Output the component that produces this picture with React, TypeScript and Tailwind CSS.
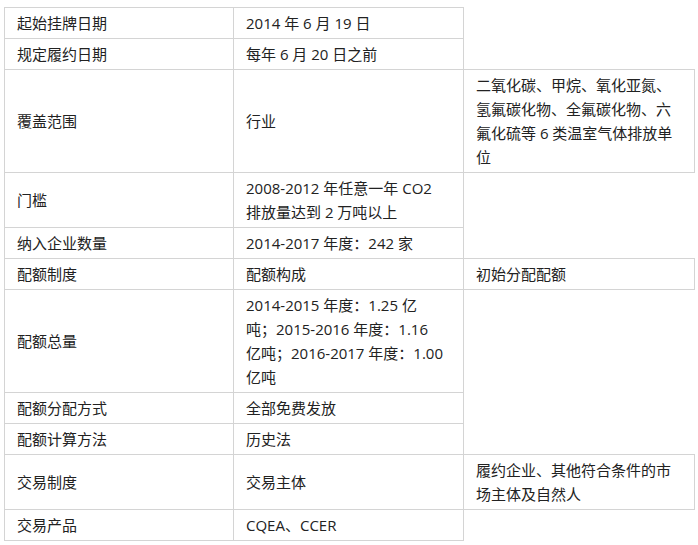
import React from 'react';

// each cell is a list of lines, broken where the reference breaks them
type Cell = string[];

const rows: Cell[][] = [
  [['起始挂牌日期'], ['2014 年 6 月 19 日']],
  [['规定履约日期'], ['每年 6 月 20 日之前']],
  [
    ['覆盖范围'],
    ['行业'],
    ['二氧化碳、甲烷、氧化亚氮、', '氢氟碳化物、全氟碳化物、六', '氟化硫等 6 类温室气体排放单', '位'],
  ],
  [['门槛'], ['2008-2012 年任意一年 CO2', '排放量达到 2 万吨以上']],
  [['纳入企业数量'], ['2014-2017 年度：242 家']],
  [['配额制度'], ['配额构成'], ['初始分配配额']],
  [
    ['配额总量'],
    ['2014-2015 年度：1.25 亿', '吨；2015-2016 年度：1.16', '亿吨；2016-2017 年度：1.00', '亿吨'],
  ],
  [['配额分配方式'], ['全部免费发放']],
  [['配额计算方法'], ['历史法']],
  [['交易制度'], ['交易主体'], ['履约企业、其他符合条件的市', '场主体及自然人']],
  [['交易产品'], ['CQEA、CCER']],
];

export default function App() {
  return (
    <div className="min-h-screen bg-white pt-[7px] pl-[4px] font-['Open_Sans','Noto_Sans_CJK_SC',sans-serif] text-[15px] leading-[24px] text-[#222]">
      <table className="border-collapse table-fixed w-[690px]">
        <colgroup>
          <col className="w-[229px]" />
          <col className="w-[230px]" />
          <col className="w-[231px]" />
        </colgroup>
        <tbody>
          {rows.map((row, i) => (
            <tr key={i}>
              {row.map((lines, j) => (
                <td
                  key={j}
                  className="border border-[#d4d4d4] px-[12px] py-[3px] align-middle whitespace-nowrap"
                >
                  {lines.map((line, k) => (
                    <React.Fragment key={k}>
                      {k > 0 && <br />}
                      {line}
                    </React.Fragment>
                  ))}
                </td>
              ))}
            </tr>
          ))}
        </tbody>
      </table>
    </div>
  );
}
